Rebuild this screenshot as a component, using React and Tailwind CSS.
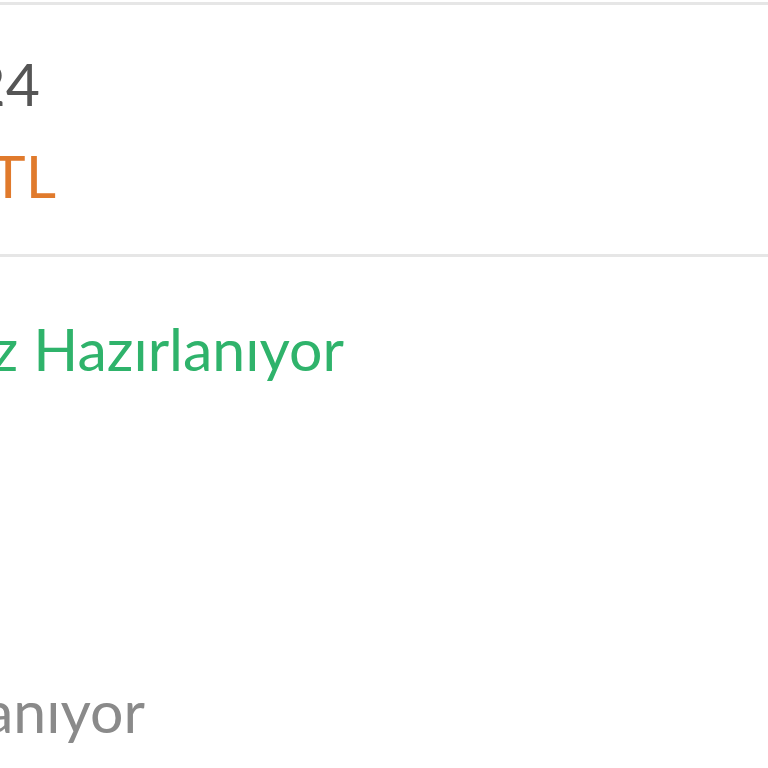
export default function App() {
  const row = "flex justify-end shrink-0 h-[59px]";
  const txt = "whitespace-nowrap shrink-0 leading-none text-[59px]";
  return (
    <div
      className="w-[768px] h-[768px] overflow-hidden bg-white flex flex-col"
      style={{ fontFamily: "Lato, 'Noto Sans', sans-serif" }}
    >
      <div className="shrink-0 mt-[2px] h-[3px] bg-[#e6e6e6]" />

      {/* order summary */}
      <div className={`${row} w-[40px] mt-[49px]`}>
        <span className={`${txt} text-[#555555]`}>12.04.2024</span>
      </div>
      <div className={`${row} w-[56px] mt-[33px]`}>
        <span className={`${txt} text-[#e07a2c]`}>1.249,90 TL</span>
      </div>
      <div className="shrink-0 mt-[49px] h-[3px] bg-[#e6e6e6]" />

      {/* status */}
      <div className={`${row} w-[344px] mt-[62px]`}>
        <span className={`${txt} text-[#2fb36b]`}>Siparişiniz Hazırlanıyor</span>
      </div>
      <div className={`${row} w-[145px] mt-[303px]`}>
        <span className={`${txt} text-[#8a8a8a]`}>Kargoya Hazırlanıyor</span>
      </div>
    </div>
  );
}
